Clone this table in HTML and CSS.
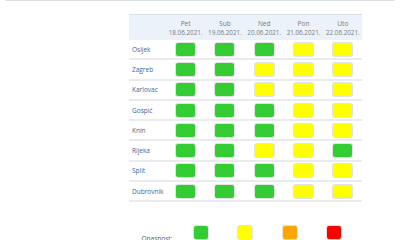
FILE: index.html
```html
<!DOCTYPE html>
<html>
<head>
<meta charset="utf-8">
<link rel="stylesheet" href="styles.css">
</head>
<body>
<div class="topline"></div>
<table class="forecast">
  <thead>
    <tr>
      <th class="city-h"></th>
      <th><span class="day">Pet</span><span class="date">18.06.2021.</span></th>
      <th><span class="day">Sub</span><span class="date">19.06.2021.</span></th>
      <th><span class="day">Ned</span><span class="date">20.06.2021.</span></th>
      <th><span class="day">Pon</span><span class="date">21.06.2021.</span></th>
      <th><span class="day">Uto</span><span class="date">22.06.2021.</span></th>
    </tr>
  </thead>
  <tbody>
    <tr><td class="city">Osijek</td><td><i class="box g"></i></td><td><i class="box g"></i></td><td><i class="box g"></i></td><td><i class="box y"></i></td><td><i class="box y"></i></td></tr>
    <tr><td class="city">Zagreb</td><td><i class="box g"></i></td><td><i class="box g"></i></td><td><i class="box y"></i></td><td><i class="box y"></i></td><td><i class="box y"></i></td></tr>
    <tr><td class="city">Karlovac</td><td><i class="box g"></i></td><td><i class="box g"></i></td><td><i class="box y"></i></td><td><i class="box y"></i></td><td><i class="box y"></i></td></tr>
    <tr><td class="city">Gospić</td><td><i class="box g"></i></td><td><i class="box g"></i></td><td><i class="box g"></i></td><td><i class="box y"></i></td><td><i class="box y"></i></td></tr>
    <tr><td class="city">Knin</td><td><i class="box g"></i></td><td><i class="box g"></i></td><td><i class="box g"></i></td><td><i class="box y"></i></td><td><i class="box y"></i></td></tr>
    <tr><td class="city">Rijeka</td><td><i class="box g"></i></td><td><i class="box g"></i></td><td><i class="box y"></i></td><td><i class="box y"></i></td><td><i class="box g"></i></td></tr>
    <tr><td class="city">Split</td><td><i class="box g"></i></td><td><i class="box g"></i></td><td><i class="box g"></i></td><td><i class="box y"></i></td><td><i class="box y"></i></td></tr>
    <tr><td class="city">Dubrovnik</td><td><i class="box g"></i></td><td><i class="box g"></i></td><td><i class="box g"></i></td><td><i class="box y"></i></td><td><i class="box y"></i></td></tr>
  </tbody>
</table>
<div class="legend">
  <span class="legend-label">Opasnost:</span>
  <div class="legend-items">
    <i class="lbox g"></i>
    <i class="lbox y"></i>
    <i class="lbox o"></i>
    <i class="lbox r"></i>
  </div>
</div>
</body>
</html>
```
FILE: styles.css
```css
html, body {
  margin: 0;
  padding: 0;
  background: #ffffff;
  font-family: "Open Sans", "Liberation Sans", sans-serif;
}

.topline {
  margin: 0 5px;
  border-top: 1px solid #dde1e6;
  height: 0;
}

.forecast {
  margin-top: 13px;
  margin-left: 129px;
  width: 233px;
  border-collapse: collapse;
  table-layout: fixed;
}

.forecast thead th {
  background: #ecf2f9;
  border-top: 1px solid #d8dee6;
  height: 25px;
  padding: 0;
  font-weight: normal;
  color: #777b80;
  text-align: center;
  vertical-align: middle;
  width: 39.3px;
}

.forecast thead th.city-h {
  width: 37px;
}

.day, .date {
  display: block;
  font-size: 6.3px;
  line-height: 9px;
  white-space: nowrap;
}

.day {
  font-size: 6.6px;
  margin-top: 1px;
}

.forecast tbody td {
  height: 18.3px;
  padding: 0;
  border-bottom: 2px solid #e9ebee;
  text-align: center;
  vertical-align: middle;
  font-size: 6.5px;
  line-height: 9px;
}

.forecast tbody td.city {
  text-align: left;
  padding-left: 3px;
  color: #3a679a;
  white-space: nowrap;
}

.box {
  display: block;
  margin: 0 auto;
  width: 19px;
  height: 13px;
  border-radius: 2px;
  box-shadow: 0 0 0 1px #e2e3e5;
}

.g { background: #33cc33; }
.y { background: #ffff00; }
.o { background: #ffa500; }
.r { background: #ff0000; }

.legend {
  display: flex;
  align-items: flex-start;
  margin-top: 24px;
  margin-left: 141.5px;
}

.legend-label {
  width: 52.5px;
  font-size: 6.5px;
  color: #555a60;
  padding-top: 7.5px;
  line-height: 9px;
}

.legend-items {
  display: flex;
  gap: 30.4px;
}

.lbox {
  display: block;
  width: 14px;
  height: 13px;
  border-radius: 2px;
  box-shadow: 0 0 0 1px #e2e3e5;
}
```
